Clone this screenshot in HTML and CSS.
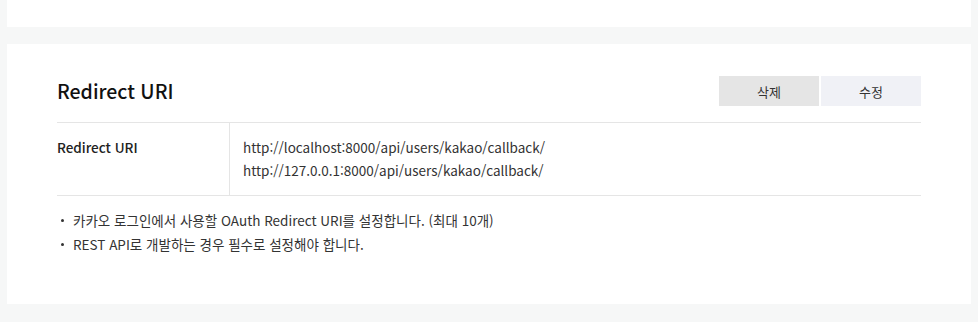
FILE: index.html
```html
<!DOCTYPE html>
<html lang="ko">
<head>
  <meta charset="UTF-8" />
  <meta name="viewport" content="width=device-width, initial-scale=1.0" />
  <title>Redirect URI</title>
  <link rel="stylesheet" href="styles.css">
</head>
<body>
  <div class="card card-top"></div>

  <div class="card section">
    <div class="section-head">
      <h2>Redirect URI</h2>
      <div class="actions">
        <button type="button" class="btn btn-delete">삭제</button>
        <button type="button" class="btn btn-edit">수정</button>
      </div>
    </div>

    <div class="info-row">
      <div class="info-label">Redirect URI</div>
      <div class="info-value">
        <p>http://localhost:8000/api/users/kakao/callback/</p>
        <p>http://127.0.0.1:8000/api/users/kakao/callback/</p>
      </div>
    </div>

    <ul class="notes">
      <li>카카오 로그인에서 사용할 OAuth Redirect URI를 설정합니다. (최대 10개)</li>
      <li>REST API로 개발하는 경우 필수로 설정해야 합니다.</li>
    </ul>
  </div>
</body>
</html>
```

FILE: styles.css
```css
body {
  margin: 0;
  background: #f6f7f7;
  font-family: 'Noto Sans CJK KR', 'Noto Sans', sans-serif;
  color: #222;
}
.card {
  background: #fff;
  margin: 0 7px;
}
.card-top {
  height: 27px;
}
.section {
  margin-top: 17px;
  padding: 32px 50px 48px;
}
.section-head {
  display: flex;
  justify-content: space-between;
  align-items: center;
  height: 30px;
  margin-bottom: 16px;
}
.section-head h2 {
  margin: 0;
  font-size: 19.5px;
  font-weight: 500;
  line-height: 30px;
  color: #111;
}
.actions {
  display: flex;
  gap: 2px;
}
.btn {
  width: 100px;
  height: 30px;
  border: none;
  font-family: inherit;
  font-size: 13px;
  color: #333;
  cursor: pointer;
}
.btn-delete {
  background: #e5e5e5;
}
.btn-edit {
  background: #f0f1f6;
}
.info-row {
  display: flex;
  border-top: 1px solid #e5e5e5;
  border-bottom: 1px solid #e5e5e5;
}
.info-label {
  width: 172px;
  padding: 13px 0;
  border-right: 1px solid #e5e5e5;
  font-size: 13.5px;
  font-weight: 500;
  line-height: 23px;
}
.info-value {
  padding: 13px 13px;
  font-size: 13.5px;
  line-height: 23px;
  color: #333;
}
.info-value p {
  margin: 0;
}
.notes {
  list-style: none;
  margin: 12px 0 0;
  padding: 0;
  font-size: 13.5px;
  line-height: 24px;
  color: #333;
}
.notes li {
  position: relative;
  padding-left: 16px;
}
.notes li::before {
  content: '';
  position: absolute;
  left: 4px;
  top: 11px;
  width: 3px;
  height: 3px;
  background: #333;
  border-radius: 50%;
}
```
